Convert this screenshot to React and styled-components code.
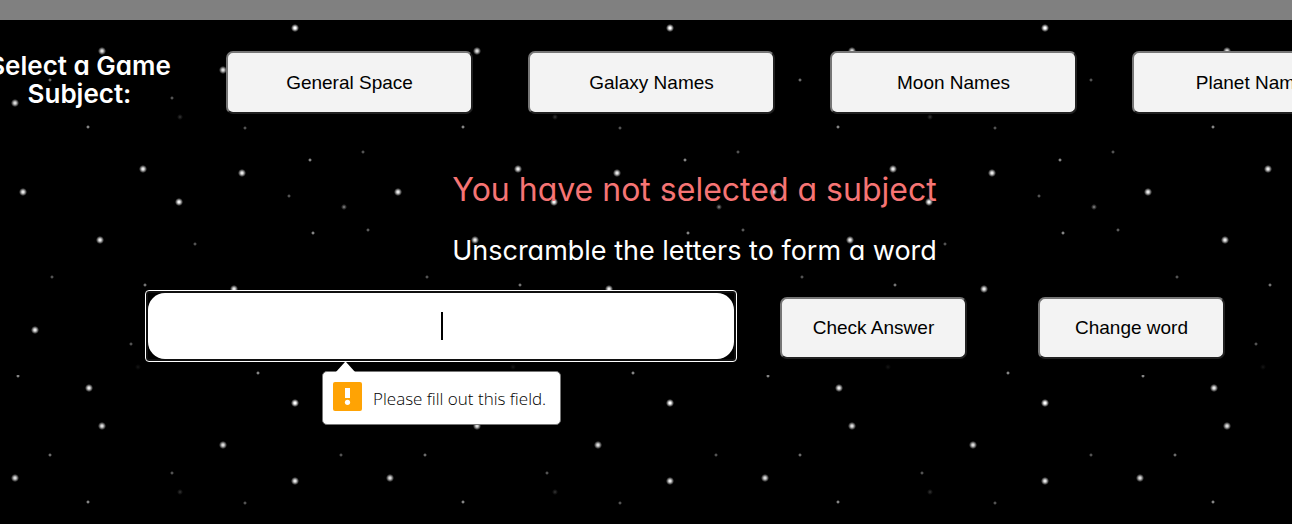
import React from "react";
import styled, { createGlobalStyle } from "styled-components";

/* One tile of the night sky: [x, y, radius, brightness] */
const TILE = 375;
const STARS = [
  [295, 28, 4, 1],
  [102, 51, 4, 0.85],
  [223, 70, 4, 0.85],
  [15, 103, 4, 0.85],
  [295, 106, 4, 0.9],
  [143, 169, 4, 0.9],
  [242, 173, 4, 0.9],
  [23, 192, 4, 0.9],
  [179, 202, 4, 0.95],
  [100, 240, 4, 0.9],
  [234, 289, 4, 0.9],
  [35, 330, 4, 0.9],
  [89, 13, 4, 0.9],
  [344, 207, 3, 0.65],
  [50, 80, 2, 0.65],
  [341, 80, 2, 0.5],
  [172, 98, 2, 0.5],
  [88, 127, 2, 0.8],
  [245, 128, 2, 0.5],
  [310, 160, 2, 0.8],
  [363, 152, 2, 0.5],
  [289, 196, 2, 0.5],
  [313, 233, 2, 0.8],
  [368, 230, 2, 0.55],
  [195, 244, 2, 0.5],
  [52, 277, 2, 0.5],
  [145, 285, 2, 0.7],
  [131, 344, 2, 0.5],
  [18, 1, 2, 0.8],
  [258, 373, 2, 0.8],
  [180, 117, 3, 0.25],
  [138, 367, 3, 0.1],
];

const drawStar = ([x, y, radius, light]) => {
  const large = radius > 3;
  const core = large ? 1 : 0;
  const halo = light * (large ? 0.65 : 0.5);
  return `radial-gradient(circle at ${x}px ${y}px, rgba(255,255,255,${light}) ${core}px, rgba(255,255,255,${halo}) ${
    core + 1
  }px, transparent ${radius}px)`;
};

const GlobalStyle = createGlobalStyle`
  *, *::before, *::after { box-sizing: border-box; }
  body {
    margin: 0;
    min-height: 100vh;
    background-color: #000;
    background-image: ${STARS.map(drawStar).join(",")};
    background-size: ${TILE}px ${TILE}px;
    color: #fff;
    font-family: Inter, "Open Sans", sans-serif;
    font-feature-settings: "cv11", "ss03";
    overflow-x: hidden;
  }
`;

const TopBar = styled.header`
  height: 20px;
  background: #808080;
`;

const Subjects = styled.nav`
  display: flex;
  align-items: center;
  gap: 55px;
  margin-left: -12px;
  padding-top: 31px;
  overflow: hidden;
`;

const SubjectsTitle = styled.h1`
  flex: none;
  width: 183px;
  margin: 0;
  padding-bottom: 5px;
  font-size: 26px;
  font-weight: 600;
  line-height: 28px;
  text-align: center;
  white-space: nowrap;
`;

const GameButton = styled.button`
  flex: none;
  width: ${(p) => (p.$wide ? 247 : 187)}px;
  height: ${(p) => (p.$wide ? 63 : 62)}px;
  padding: 0;
  border: 2px solid;
  border-color: #767676 #212121 #212121 #767676;
  border-radius: 7px;
  background: #f3f3f3;
  color: #000;
  font-family: "Liberation Sans", Arial, sans-serif;
  font-size: 19px;
`;

const Messages = styled.section`
  padding: 56px 0 0 97px;
  text-align: center;
`;

const Warning = styled.p`
  margin: 0;
  color: #f67474;
  font-size: 32px;
  font-weight: 400;
  line-height: 40px;
`;

const Instruction = styled.h2`
  margin: 25px 0 0;
  font-size: 27px;
  font-weight: 400;
  line-height: 32px;
`;

const AnswerForm = styled.form`
  display: flex;
  align-items: center;
  padding: 23px 67px 0 145px;
`;

const FocusRing = styled.div`
  position: relative;
  flex: 1;
  min-width: 0;
  margin-right: 43px;
  padding: 2px;
  border: 1px solid #fff;
  border-radius: 4px;
  background: #000;
  box-shadow: inset 0 0 0 2px #101010;
`;

const AnswerInput = styled.input`
  display: block;
  width: 100%;
  height: 66px;
  border: 0;
  border-radius: 17px;
  outline: 0;
  background: #fff;
  font-family: "Liberation Sans", Arial, sans-serif;
  font-size: 24px;
  text-align: center;
`;

const Caret = styled.span`
  position: absolute;
  top: 21px;
  left: 50%;
  width: 2px;
  height: 28px;
  background: #000;
`;

const Buttons = styled.div`
  display: flex;
  gap: 71px;
  padding-top: 3px;
`;

const Tooltip = styled.div`
  position: absolute;
  top: 80px;
  left: 176px;
  display: flex;
  align-items: center;
  gap: 11px;
  height: 54px;
  padding: 0 14px 0 10px;
  border: 1px solid #767676;
  border-radius: 5px;
  background: #fff;
  color: #000;
  font-family: "Open Sans", "Noto Sans", sans-serif;
  font-size: 17px;
  font-weight: 300;
  white-space: nowrap;
`;

const Pointer = styled.svg`
  position: absolute;
  top: -10px;
  left: 12px;
`;

const AlertIcon = styled.svg`
  flex: none;
  margin-bottom: 4px;
`;

const SUBJECTS = ["General Space", "Galaxy Names", "Moon Names", "Planet Names"];

export default function App() {
  return (
    <>
      <GlobalStyle />
      <TopBar />
      <main>
        <Subjects aria-label="Game subjects">
          <SubjectsTitle>
            Select a Game
            <br />
            Subject:
          </SubjectsTitle>
          {SUBJECTS.map((name) => (
            <GameButton key={name} type="button" $wide>
              {name}
            </GameButton>
          ))}
        </Subjects>
        <Messages>
          <Warning>You have not selected a subject</Warning>
          <Instruction id="instruction">
            Unscramble the letters to form a word
          </Instruction>
        </Messages>
        <AnswerForm noValidate onSubmit={(e) => e.preventDefault()}>
          <FocusRing>
            <AnswerInput type="text" aria-labelledby="instruction" required />
            <Caret />
            <Tooltip role="alert">
              <Pointer width="22" height="11" viewBox="0 0 22 11">
                <path d="M0 11 L10 0 H11 L21 11Z" fill="#fff" />
              </Pointer>
              <AlertIcon width="29" height="29" viewBox="0 0 29 29">
                <rect width="29" height="29" rx="2" fill="#ffa304" />
                <path d="M12 6h5v10h-5z" fill="#fff" />
                <circle cx="14.5" cy="20.3" r="2.6" fill="#fff" />
              </AlertIcon>
              Please fill out this field.
            </Tooltip>
          </FocusRing>
          <Buttons>
            <GameButton type="submit">Check Answer</GameButton>
            <GameButton type="button">Change word</GameButton>
          </Buttons>
        </AnswerForm>
      </main>
    </>
  );
}
